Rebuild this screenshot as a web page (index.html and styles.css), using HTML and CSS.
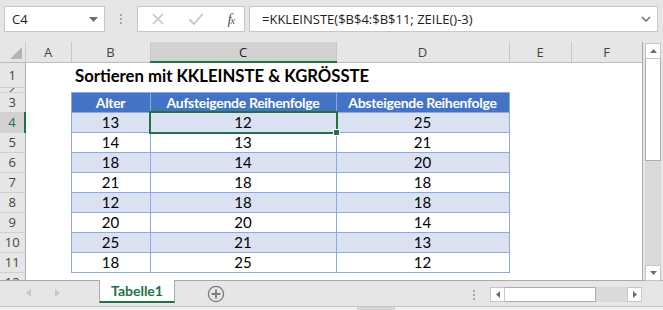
FILE: index.html
```html
<!DOCTYPE html>
<html>
<head>
    <link rel="stylesheet" href="styles.css">
</head>
<body>
    <div class="toolbar">
        <div class="namebox">
            <span>C4</span>
            <svg class="caret" width="9" height="5" viewBox="0 0 9 5"><path d="M0 0h9L4.5 5z" fill="#6d6d6d"/></svg>
        </div>
        <div class="grip"><i></i><i></i><i></i></div>
        <div class="fnbox">
            <svg width="14" height="14" viewBox="0 0 14 14"><path d="M2 2l10 10M12 2L2 12" stroke="#c4c4c4" stroke-width="1.6" fill="none"/></svg>
            <svg width="16" height="14" viewBox="0 0 16 14"><path d="M1.5 7.5l4.5 4.5 8.5-10" stroke="#c4c4c4" stroke-width="1.8" fill="none"/></svg>
            <span class="fx">f<sub>x</sub></span>
        </div>
        <div class="formula">
            <span>=KKLEINSTE($B$4:$B$11; ZEILE()-3)</span>
            <svg width="10" height="6" viewBox="0 0 10 6"><path d="M1 1l4 4 4-4" stroke="#666" stroke-width="1.4" fill="none"/></svg>
        </div>
    </div>

    <div class="workspace">
        <div class="sheet">
            <table class="grid">
                <colgroup>
                    <col style="width:25px"><col style="width:46px"><col style="width:79px"><col style="width:186px"><col style="width:173px"><col style="width:62px"><col style="width:71px">
                </colgroup>
                <tr class="colhead">
                    <th class="corner"><span class="tri"></span></th>
                    <th>A</th><th>B</th><th class="active">C</th><th>D</th><th>E</th><th>F</th>
                </tr>
                <tr class="r-title">
                    <th class="rowhead">1</th><td></td>
                    <td colspan="5" class="title">Sortieren mit KKLEINSTE &amp; KGRÖSSTE</td>
                </tr>
                <tr class="r-thin">
                    <th class="rowhead"><div>2</div></th><td></td><td></td><td></td><td></td><td></td><td></td>
                </tr>
                <tr>
                    <th class="rowhead">3</th><td></td>
                    <td class="hd">Alter</td><td class="hd">Aufsteigende Reihenfolge</td><td class="hd">Absteigende Reihenfolge</td><td></td><td></td>
                </tr>
                <tr class="band">
                    <th class="rowhead active">4</th><td></td>
                    <td class="c">13</td><td class="c sel">12<span class="cursor"></span></td><td class="c">25</td><td></td><td></td>
                </tr>
                <tr>
                    <th class="rowhead">5</th><td></td>
                    <td class="c">14</td><td class="c">13</td><td class="c">21</td><td></td><td></td>
                </tr>
                <tr class="band">
                    <th class="rowhead">6</th><td></td>
                    <td class="c">18</td><td class="c">14</td><td class="c">20</td><td></td><td></td>
                </tr>
                <tr>
                    <th class="rowhead">7</th><td></td>
                    <td class="c">21</td><td class="c">18</td><td class="c">18</td><td></td><td></td>
                </tr>
                <tr class="band">
                    <th class="rowhead">8</th><td></td>
                    <td class="c">12</td><td class="c">18</td><td class="c">18</td><td></td><td></td>
                </tr>
                <tr>
                    <th class="rowhead">9</th><td></td>
                    <td class="c">20</td><td class="c">20</td><td class="c">14</td><td></td><td></td>
                </tr>
                <tr class="band">
                    <th class="rowhead">10</th><td></td>
                    <td class="c">25</td><td class="c">21</td><td class="c">13</td><td></td><td></td>
                </tr>
                <tr>
                    <th class="rowhead">11</th><td></td>
                    <td class="c">18</td><td class="c">25</td><td class="c">12</td><td></td><td></td>
                </tr>
                <tr>
                    <th class="rowhead">12</th><td></td><td></td><td></td><td></td><td></td><td></td>
                </tr>
            </table>
        </div>
        <div class="vscroll">
            <div class="sbtn"><svg width="7" height="4" viewBox="0 0 7 4"><path d="M0 4h7L3.5 0z" fill="#6d6d6d"/></svg></div>
            <div class="vthumb"></div>
            <div class="vtrack"></div>
            <div class="sbtn"><svg width="7" height="4" viewBox="0 0 7 4"><path d="M0 0h7L3.5 4z" fill="#6d6d6d"/></svg></div>
        </div>
    </div>

    <div class="tabbar">
        <div class="tabnav">
            <svg width="5" height="8" viewBox="0 0 5 8"><path d="M5 0v8L0 4z" fill="#c8c8c8"/></svg>
            <svg width="5" height="8" viewBox="0 0 5 8"><path d="M0 0v8l5-4z" fill="#c8c8c8"/></svg>
        </div>
        <div class="tab">Tabelle1</div>
        <div class="addsheet">
            <svg width="18" height="18" viewBox="0 0 18 18"><circle cx="9" cy="9" r="7.6" stroke="#7a7a7a" stroke-width="1.3" fill="none"/><path d="M9 4.5v9M4.5 9h9" stroke="#7a7a7a" stroke-width="1.8"/></svg>
        </div>
        <div class="spacer"></div>
        <div class="grip small"><i></i><i></i><i></i></div>
        <div class="hscroll">
            <div class="sbtn"><svg width="4" height="7" viewBox="0 0 4 7"><path d="M4 0v7L0 3.5z" fill="#6d6d6d"/></svg></div>
            <div class="hthumb"></div>
            <div class="htrack"></div>
            <div class="sbtn"><svg width="4" height="7" viewBox="0 0 4 7"><path d="M0 0v7l4-3.5z" fill="#6d6d6d"/></svg></div>
        </div>
    </div>
    <div class="statusline"><span></span></div>
</body>
</html>
```

FILE: styles.css
```css
body {
    margin: 0;
    padding: 0;
    width: 663px;
    height: 310px;
    background: #e6e6e6;
    font-family: "Open Sans", Arial, sans-serif;
    overflow: hidden;
}

/* formula bar */
.toolbar {
    height: 42px;
    display: flex;
    align-items: flex-start;
    padding-top: 6px;
    box-sizing: border-box;
}

.namebox,
.fnbox,
.formula {
    height: 26px;
    background: #fff;
    border: 1px solid #c6c6c6;
    box-sizing: border-box;
    display: flex;
    align-items: center;
    font-size: 13px;
    color: #222;
}

.namebox {
    width: 101px;
    margin-left: 4px;
    padding: 0 6px 0 7px;
    justify-content: space-between;
}

.grip {
    width: 32px;
    height: 26px;
    display: flex;
    flex-direction: column;
    align-items: center;
    justify-content: center;
    gap: 2px;
}

.grip i {
    width: 2px;
    height: 2px;
    background: #a8a8a8;
}

.fnbox {
    width: 108px;
    padding: 0 10px 0 13px;
    justify-content: space-between;
}

.fx {
    font-family: "Liberation Serif", serif;
    font-style: italic;
    font-size: 15px;
    color: #555;
    letter-spacing: -1px;
}

.fx sub {
    font-size: 10px;
    vertical-align: 0;
}

.formula {
    flex: 1;
    margin: 0 5px 0 4px;
    padding: 0 6px 0 12px;
    justify-content: space-between;
}

/* sheet */
.workspace {
    display: flex;
    height: 238px;
}

.sheet {
    width: 642px;
    height: 238px;
    overflow: hidden;
    background: #fff;
    border-right: 1px solid #ababab;
    box-sizing: content-box;
}

.grid {
    border-collapse: collapse;
    table-layout: fixed;
    width: 642px;
    font-family: Lato, "Liberation Sans", sans-serif;
    font-size: 15px;
    color: #000;
}

.grid td,
.grid th {
    padding: 0;
    overflow: hidden;
    white-space: nowrap;
}

.grid tr {
    height: 20px;
}

.colhead th {
    background: #e6e6e6;
    border-right: 1px solid #c8c8c8;
    border-bottom: 1px solid #bcbcbc;
    font-weight: normal;
    font-family: "Open Sans", sans-serif;
    font-size: 13px;
    color: #444;
}

.colhead th.active {
    background: #d2d2d2;
    border-bottom: 2px solid #217346;
    color: #222;
}

.corner {
    position: relative;
}

.corner .tri {
    position: absolute;
    right: 3px;
    bottom: 3px;
    width: 0;
    height: 0;
    border-left: 12px solid transparent;
    border-bottom: 12px solid #b4b4b4;
}

.rowhead {
    background: #e6e6e6;
    border-right: 1px solid #ababab;
    border-bottom: 1px solid #d0d0d0;
    font-weight: normal;
    font-family: "Open Sans", sans-serif;
    font-size: 13px;
    color: #444;
}

.rowhead.active {
    background: #d2d2d2;
    border-right: 2px solid #217346;
    color: #217346;
}

.r-title {
    height: 25px !important;
}

.title {
    font-weight: bold;
    font-size: 16.7px;
    vertical-align: bottom;
    padding: 0 0 1px 4px !important;
}

.r-thin {
    height: 5px !important;
}

.r-thin th div {
    height: 4px;
    overflow: hidden;
    line-height: 0;
}

.hd {
    background: #4472c4;
    color: #fff;
    font-weight: bold;
    font-size: 14px;
    letter-spacing: -0.3px;
    text-align: center;
    border: 1px solid #8ea9db;
}

.c {
    text-align: center;
    border: 1px solid #8ea9db;
}

.band .c {
    background: #d9e1f2;
}

.grid td.sel {
    position: relative;
    overflow: visible;
}

.cursor {
    position: absolute;
    left: -2px;
    top: -2px;
    right: -2px;
    bottom: -2px;
    border: 2px solid #217346;
}

.cursor::after {
    content: "";
    position: absolute;
    right: -4px;
    bottom: -4px;
    width: 5px;
    height: 5px;
    background: #217346;
    border: 1px solid #fff;
}

/* scrollbars */
.vscroll {
    width: 16px;
    margin: 1px 0 0 2px;
    display: flex;
    flex-direction: column;
    height: 238px;
}

.sbtn {
    width: 16px;
    height: 16px;
    background: #fff;
    border: 1px solid #c6c6c6;
    box-sizing: border-box;
    display: flex;
    align-items: center;
    justify-content: center;
}

.vthumb {
    height: 102px;
    background: #fff;
    border: 1px solid #ababab;
    border-top: none;
    box-sizing: border-box;
}

.vtrack {
    flex: 1;
    background: #dadada;
}

.tabbar {
    height: 26px;
    display: flex;
    align-items: flex-start;
    border-top: 1px solid #ababab;
    box-sizing: border-box;
}

.tabnav {
    width: 99px;
    height: 24px;
    display: flex;
    align-items: center;
    gap: 24px;
    padding-left: 26px;
    box-sizing: border-box;
}

.tab {
    width: 76px;
    height: 23px;
    margin-top: -1px;
    background: #fff;
    border-left: 1px solid #ababab;
    border-right: 1px solid #ababab;
    border-bottom: 2px solid #217346;
    box-sizing: border-box;
    text-align: center;
    font-family: Lato, "Liberation Sans", sans-serif;
    font-weight: bold;
    font-size: 14px;
    line-height: 22px;
    color: #217346;
}

.addsheet {
    margin-left: 32px;
    margin-top: 4px;
}

.spacer {
    flex: 1;
}

.grip.small {
    width: 32px;
    height: 20px;
    margin-top: 4px;
}

.hscroll {
    display: flex;
    width: 152px;
    height: 15px;
    margin: 6px 21px 0 0;
}

.hscroll .sbtn {
    width: 15px;
    height: 15px;
}

.hthumb {
    width: 91px;
    background: #fff;
    border: 1px solid #ababab;
    border-left: none;
    box-sizing: border-box;
}

.htrack {
    flex: 1;
    background: #dadada;
}

.statusline {
    height: 4px;
    border-top: 1px solid #c6c6c6;
    background: #f0f0f0;
}

.statusline span {
    display: block;
    width: 38px;
    height: 4px;
    margin-left: 357px;
    background: #d4d4d4;
}
```
